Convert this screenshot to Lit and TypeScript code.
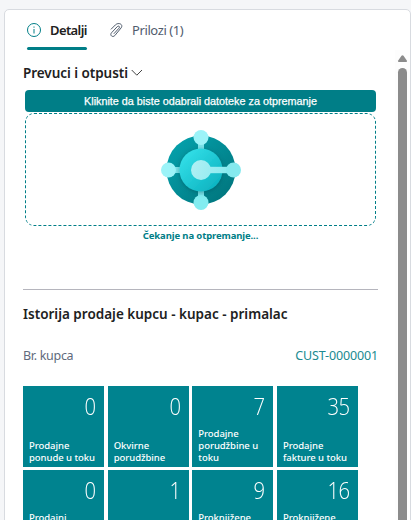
import { LitElement, html, css } from "lit";
import { customElement, property } from "lit/decorators.js";

@customElement("cue-tile")
class CueTile extends LitElement {
  @property() value = "";
  @property({ attribute: false }) lines: string[] = [];

  static styles = css`
    :host {
      display: flex;
      flex-direction: column;
      justify-content: space-between;
      box-sizing: border-box;
      width: 81px;
      height: 81px;
      padding: 6px 9px 3px 6px;
      background: #00838f;
      color: #fff;
      font-family: "Open Sans", "Noto Sans", sans-serif;
    }
    .value {
      font-size: 23px;
      font-weight: 300;
      line-height: 28px;
      text-align: right;
      letter-spacing: -0.6px;
      margin-right: -0.6px;
      transform: scaleX(0.88);
      transform-origin: right;
    }
    .label {
      font-family: "Noto Sans", sans-serif;
      font-size: 9.5px;
      line-height: 12px;
      font-weight: 500;
      white-space: nowrap;
      letter-spacing: -0.05px;
    }
    .label div {
      height: 12px;
    }
  `;

  render() {
    return html`<div class="value">${this.value}</div>
      <div class="label">${this.lines.map((l) => html`<div>${l}</div>`)}</div>`;
  }
}

const TILES: { value: string; lines: string[] }[] = [
  { value: "0", lines: ["Prodajne", "ponude u toku"] },
  { value: "0", lines: ["Okvirne", "porudžbine"] },
  { value: "7", lines: ["Prodajne", "porudžbine u", "toku"] },
  { value: "35", lines: ["Prodajne", "fakture u toku"] },
  { value: "0", lines: ["Prodajni", "", ""] },
  { value: "1", lines: [] },
  { value: "9", lines: ["Proknjižene", "", ""] },
  { value: "16", lines: ["Proknjižene", "", ""] },
];

@customElement("app-root")
class AppRoot extends LitElement {
  static styles = css`
    :host {
      display: block;
      box-sizing: border-box;
      width: 411px;
      height: 520px;
      padding: 9px 0 0 4px;
      overflow: hidden;
      background: #f5f6f8;
      color: #212121;
      font-family: "Noto Sans", "Open Sans", sans-serif;
    }
    .card {
      display: flex;
      justify-content: space-between;
      box-sizing: border-box;
      height: 530px;
      border: 1px solid #d8dbe0;
      border-radius: 5px;
      background: #fff;
    }
    .content {
      width: 355px;
      margin-left: 18px;
    }
    .tabs {
      display: flex;
      height: 41px;
      padding: 3px 0 0 4px;
      box-sizing: border-box;
      gap: 23px;
    }
    .tab {
      display: flex;
      align-items: center;
      box-sizing: border-box;
      height: 37px;
      padding-bottom: 3px;
      line-height: 20px;
      white-space: nowrap;
      font-size: 13px;
      color: #505c6d;
    }
    .tab.active {
      position: relative;
      width: 60px;
    }
    .tab.active::after {
      content: "";
      position: absolute;
      left: 0;
      right: 0;
      bottom: 0;
      height: 3px;
      border-radius: 1.5px;
      background: #007e87;
    }
    .active {
      color: #212121;
    }
    .tab svg {
      flex: none;
      margin-right: 9px;
    }
    .active .name {
      font-weight: 600;
      letter-spacing: -0.6px;
    }
    .name {
      letter-spacing: -0.4px;
    }
    .title {
      display: flex;
      align-items: center;
      gap: 3px;
      height: 20px;
      margin-top: 12px;
      font-size: 13.5px;
      font-weight: 600;
      line-height: 20px;
      letter-spacing: -0.05px;
      white-space: nowrap;
    }
    .upload {
      width: 351px;
      margin: 7px 0 0 2px;
    }
    .pick {
      height: 22px;
      border-radius: 4px;
      background: #007e87;
      color: #fff;
      font: 10.8px/22px "Liberation Sans", Arial, sans-serif;
      text-align: center;
      -webkit-text-stroke: 0.25px #fff;
    }
    .drop {
      display: flex;
      justify-content: center;
      align-items: center;
      box-sizing: border-box;
      height: 113px;
      margin-top: 1px;
      border: 1px dashed #007e87;
      border-radius: 9px;
    }
    .status {
      height: 18px;
      color: #007e87;
      font-size: 9.5px;
      font-weight: 700;
      line-height: 19px;
      letter-spacing: -0.12px;
      text-align: center;
      white-space: nowrap;
    }
    .history {
      margin-top: 45px;
      border-top: 1px solid #b5b5bd;
    }
    .history-title {
      margin-top: 14px;
      font-size: 13.5px;
      font-weight: 600;
      line-height: 20px;
      white-space: nowrap;
    }
    .field {
      display: flex;
      justify-content: space-between;
      margin: 22px 0 20px;
      font-size: 12.5px;
      line-height: 20px;
      letter-spacing: -0.3px;
      color: #606a7c;
    }
    .link {
      color: #208a90;
      letter-spacing: -0.15px;
    }
    .tiles {
      display: grid;
      grid-template-columns: repeat(4, 81px);
      justify-content: space-between;
      width: 335px;
      row-gap: 3px;
    }
    .scroll {
      width: 15px;
      margin-top: 40px;
      background: #fdfdfd;
    }
    .scroll svg {
      display: block;
    }
  `;

  render() {
    return html`
      <div class="card">
        <div class="content">
          <div class="tabs">
            <div class="tab active">
              <svg width="14" height="14" viewBox="0 0 14 14" fill="none" stroke="#007e87">
                <circle cx="7" cy="7" r="6.5" />
                <path d="M7 6v4.5M7 3.5v1.2" />
              </svg>
              <span class="name">Detalji</span>
            </div>
            <div class="tab">
              <svg width="13" height="15" viewBox="0 0 13 15" fill="none" stroke="#505c6d" stroke-linecap="round" stroke-linejoin="round">
                <path d="M1.2 6.100L5.400 1.900C8.400-1 13.600 1.200 11.200 4.800L4.800 12.600C2.600 14.800-.6 12.300 1.500 9.800L7.300 3.600C8.800 2.300 10.300 3.800 9 5.200L4.100 10.500" />
              </svg>
              <span class="name">Prilozi (1)</span>
            </div>
          </div>
          <div class="title">
            <span class="drop-title">Prevuci i otpusti</span>
            <svg width="12" height="8" viewBox="0 0 12 8" fill="none" stroke="#444">
              <path d="M.7 1l5.100 5.200L11 1" />
            </svg>
          </div>
          <div class="upload">
            <div class="pick">Kliknite da biste odabrali datoteke za otpremanje</div>
            <div class="drop">
              <svg width="80" height="80" viewBox="0 0 80 80">
                <defs>
                  <linearGradient id="ring" x1="0" y1="0" x2="1" y2="1">
                    <stop offset="0" stop-color="#05a6b1" />
                    <stop offset="1" stop-color="#007078" />
                  </linearGradient>
                  <linearGradient id="disc" x1="0" y1="0" x2="1" y2="1">
                    <stop offset="0" stop-color="#38e5ed" />
                    <stop offset="1" stop-color="#08adbb" />
                  </linearGradient>
                  <linearGradient id="arm" x1="30" y1="30" x2="72" y2="46" gradientUnits="userSpaceOnUse">
                    <stop offset="0" stop-color="#b2f0f4" />
                    <stop offset="1" stop-color="#83e9ee" />
                  </linearGradient>
                  <filter id="shade" x="-30%" y="-30%" width="160%" height="160%">
                    <feDropShadow dx="0" dy="1" stdDeviation="2" flood-color="#004c55" flood-opacity=".5" />
                  </filter>
                </defs>
                <circle cx="40" cy="40" r="34.5" fill="url(#ring)" />
                <path d="M40 8v64M8 40h26" stroke="#7be3e9" stroke-width="6" />
                <circle cx="40" cy="7.5" r="7.5" fill="#9cf3f8" />
                <circle cx="7.5" cy="40" r="7.5" fill="#9cf3f8" />
                <circle cx="40" cy="72.5" r="7.5" fill="#82ecf0" />
                <circle cx="40" cy="40" r="21.5" fill="url(#disc)" filter="url(#shade)" />
                <path d="M40 36.8h32v6.4H40z" fill="url(#arm)" />
                <circle cx="40" cy="40" r="10" fill="url(#arm)" />
                <circle cx="72.5" cy="40" r="7.5" fill="#85e9ee" />
              </svg>
            </div>
            <div class="status">Čekanje na otpremanje...</div>
          </div>
          <div class="history">
            <div class="history-title">Istorija prodaje kupcu - kupac - primalac</div>
            <div class="field">
              <span class="key">Br. kupca</span>
              <span class="link">CUST-0000001</span>
            </div>
            <div class="tiles">
              ${TILES.map((t) => html`<cue-tile .value=${t.value} .lines=${t.lines}></cue-tile>`)}
            </div>
          </div>
        </div>
        <div class="scroll">
          <svg width="15" height="480" viewBox="0 0 15 480" fill="#8b8b8b">
            <path d="M4 12q-1.600 0-.8-1.500L6.500 5.800q1-1.200 2 0l3.300 4.700q.8 1.500-.8 1.500z" />
            <rect x="3" y="18" width="9" height="480" rx="4.500" />
          </svg>
        </div>
      </div>
    `;
  }
}
